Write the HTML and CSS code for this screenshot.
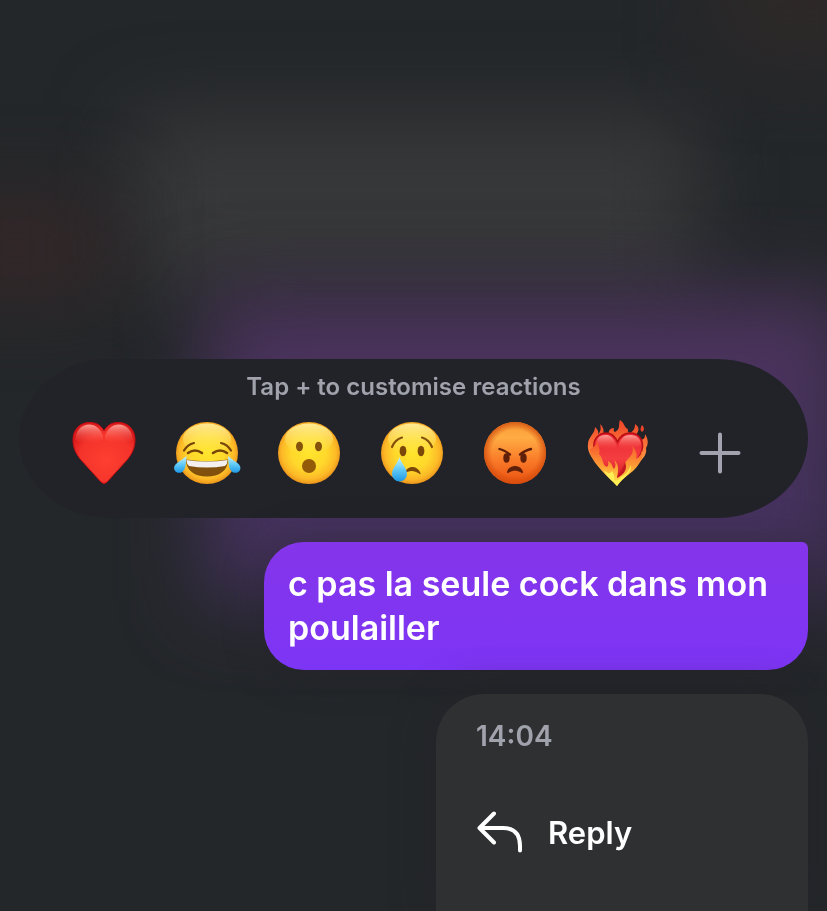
FILE: index.html
```html
<!DOCTYPE html>
<html lang="en">
<head>
<meta charset="utf-8">
<meta name="viewport" content="width=device-width, initial-scale=1">
<title>Message reactions</title>
<link rel="stylesheet" href="styles.css">
</head>
<body>
<div class="backdrop" aria-hidden="true">
  <span class="glow glow-grey"></span>
  <span class="glow glow-red"></span>
  <span class="glow glow-brown"></span>
  <span class="glow glow-purple"></span>
</div>
<main class="overlay">
  <section class="reactions" aria-label="Reactions">
    <p class="hint">Tap + to customise reactions</p>
    <div class="reaction-row">
      <button class="reaction" type="button" aria-label="Heart">
        <svg class="emoji" viewBox="0 0 72 72">
          <defs>
            <radialGradient id="heart" gradientUnits="userSpaceOnUse" cx="38" cy="43" r="38"><stop offset="0" stop-color="#ff3f30"/><stop offset=".7" stop-color="#f4332b"/><stop offset="1" stop-color="#d81a1b"/></radialGradient>
            <linearGradient id="heartShine" x1="0" y1="0" x2="0" y2="1"><stop offset="0" stop-color="#ffb5aa" stop-opacity=".85"/><stop offset="1" stop-color="#ff5a4c" stop-opacity="0"/></linearGradient>
          </defs>
          <path fill="url(#heart)" stroke="#c50d12" d="M36 14C33 8 28 5.500 21.500 5.500C11.500 5.500 5 13 5 22.500C5 31 8 37 13 43L33 65Q36 68 39 65L59 43C64 37 67 31 67 22.500C67 13 60.500 5.500 50.500 5.500C44 5.500 39 8 36 14Z"/>
          <path fill="url(#heartShine)" d="M35 19C32 11 27 7.500 21.500 7.500C13 7.500 7.500 14 7.500 23Q20 29 35 23ZM37 19C40 11 45 7.500 50.500 7.500C59 7.500 64.500 14 64.500 23Q52 29 37 23Z"/>
        </svg>
      </button>
      <button class="reaction" type="button" aria-label="Tears of joy">
        <svg class="emoji" viewBox="0 0 72 72">
          <defs>
            <radialGradient id="yellow" gradientUnits="userSpaceOnUse" cx="36" cy="35" r="32"><stop offset="0" stop-color="#ffe52c"/><stop offset=".55" stop-color="#ffd82b"/><stop offset=".85" stop-color="#fcb927"/><stop offset="1" stop-color="#ec951b"/></radialGradient>
            <linearGradient id="faceShine" x1="0" y1="0" x2="0" y2="1"><stop offset="0" stop-color="#fff0a0" stop-opacity=".9"/><stop offset="1" stop-color="#ffec60" stop-opacity="0"/></linearGradient>
            <linearGradient id="tear" x1="0" y1="0" x2="0" y2="1"><stop offset="0" stop-color="#c9f3ff"/><stop offset=".5" stop-color="#62caf8"/><stop offset="1" stop-color="#1e98e4"/></linearGradient>
          </defs>
          <circle cx="36" cy="36" r="31" fill="url(#yellow)"/>
          <ellipse cx="36" cy="22" rx="24" ry="15.500" fill="url(#faceShine)"/>
          <g fill="none" stroke="#75450b" stroke-width="2.200" stroke-linecap="round"><path d="M13 33.500Q16.500 27.500 23 26M50 26Q56.500 27.500 60 33.500"/><path stroke-width="2.600" d="M17 36Q24 31 31 36M42 36Q49 31 56 36"/></g>
          <path fill="#81500c" d="M15 42.500Q36 46 57 42.500C57 54 48 59.500 36 59.500S15 54 15 42.500Z"/>
          <path fill="#f3f0ef" d="M15.500 43Q36 46 56.500 43Q56.500 47 54 49Q36 52 18 49Q15.500 47 15.500 43Z"/>
          <path fill="url(#tear)" d="M15.500 39C15 45 15 50 13 53C10.500 57 5 56.500 3.500 53C1 47 9 45 15.500 39ZM57 39C57.500 45 57.500 50 59.500 53C62 57 67.500 56.500 69 53C71.500 47 63.500 45 57 39Z"/>
        </svg>
      </button>
      <button class="reaction" type="button" aria-label="Surprised">
        <svg class="emoji" viewBox="0 0 72 72">
          <circle cx="36" cy="36" r="31" fill="url(#yellow)"/>
          <ellipse cx="36" cy="22" rx="24" ry="15.500" fill="url(#faceShine)"/>
          <g fill="#85530c"><ellipse cx="26.500" cy="29.500" rx="3.500" ry="4.800"/><ellipse cx="45.500" cy="29.500" rx="3.500" ry="4.800"/><circle cx="36" cy="49" r="7" fill="#935a08"/></g>
        </svg>
      </button>
      <button class="reaction" type="button" aria-label="Crying">
        <svg class="emoji" viewBox="0 0 72 72">
          <circle cx="36" cy="36" r="31" fill="url(#yellow)"/>
          <ellipse cx="36" cy="22" rx="24" ry="15.500" fill="url(#faceShine)"/>
          <g fill="none" stroke="#85500c" stroke-width="2.200" stroke-linecap="round"><path d="M16 30Q19 22.500 26 20.500M46 20.500Q53 22.500 56 30"/></g>
          <g fill="#7b480a"><ellipse cx="27" cy="34" rx="3.400" ry="5.200"/><ellipse cx="45" cy="34" rx="3.400" ry="5.200"/><path d="M28 57C31 48 41 48 44.500 56Q45 58 43 56.500C38 53 33 53 28 57Z"/></g>
          <path fill="url(#tear)" d="M23.500 40C25 46 31 51 31 57A7.500 7.500 0 0 1 16 57C16 51 22 46 23.500 40Z"/>
        </svg>
      </button>
      <button class="reaction" type="button" aria-label="Angry">
        <svg class="emoji" viewBox="0 0 72 72">
          <defs>
            <linearGradient id="angry" x1="0" y1="0" x2="0" y2="1"><stop offset="0" stop-color="#f99a35"/><stop offset=".25" stop-color="#ffac43"/><stop offset=".6" stop-color="#fa7d2a"/><stop offset="1" stop-color="#e9500f"/></linearGradient>
            <radialGradient id="angryEdge"><stop offset=".75" stop-color="#d24c0d" stop-opacity="0"/><stop offset="1" stop-color="#d24c0d" stop-opacity=".8"/></radialGradient>
          </defs>
          <circle cx="36" cy="36" r="31" fill="url(#angry)"/>
          <circle cx="36" cy="36" r="31" fill="url(#angryEdge)"/>
          <g fill="none" stroke="#5c1d08" stroke-width="2.300" stroke-linecap="round"><path d="M20.500 32Q25 33 31 37.500M52 32Q47 33 41 37.500"/></g>
          <g fill="#5f2009"><ellipse cx="27.500" cy="41" rx="3.200" ry="4.800"/><ellipse cx="44.500" cy="41" rx="3.200" ry="4.800"/><path d="M28 55C30 47 42 47 44 55Q44 57 42 55.500C38 53 34 53 30 55.500Q28 57 28 55Z"/></g>
        </svg>
      </button>
      <button class="reaction" type="button" aria-label="Heart on fire">
        <svg class="emoji" viewBox="0 0 72 72">
          <defs>
            <linearGradient id="flame" x1="0" y1="0" x2="0" y2="1"><stop offset="0" stop-color="#ee4428"/><stop offset=".6" stop-color="#fb793a"/><stop offset="1" stop-color="#ffae48"/></linearGradient>
            <linearGradient id="burn" x1="0" y1="0" x2="0" y2="1"><stop offset="0" stop-color="#f34a2c"/><stop offset=".55" stop-color="#ff9a34"/><stop offset="1" stop-color="#fff04a"/></linearGradient>
            <linearGradient id="hot" x1="0" y1="0" x2="0" y2="1"><stop offset="0" stop-color="#e92531"/><stop offset=".5" stop-color="#f43e40"/><stop offset="1" stop-color="#c9141c"/></linearGradient>
          </defs>
          <path fill="url(#flame)" d="M18 48C10 41 6 34 7 27C7 20 14 17 14 10C17 13 18 15 17 18Q21 13 19 7Q24 11 22 18L28 18C27 14 29 11 33 11Q32 14 34 15C40 12 37 7 39 3C44 6 43 11 47 12Q46 15 49 16C53 14 54 11 54 7C59 10 58 14 55 18L60 23C64 22 64 20 64 17C68 23 67 28 65 31C66 36 64 41 54 49Z"/>
          <path fill="#ee4428" d="M61 8Q65 12 61 15Q58 13 61 8Z"/>
          <path fill="url(#hot)" stroke="#b70e16" stroke-width="1.500" d="M36.500 25C34 19 30 16 25 16C18 16 12 22 13 30C14 43 25 51 36 67C48 52 60 43 61.500 30C62 22 57 16 49.500 16C43 16 39 19 36.500 25Z"/>
          <path fill="url(#heartShine)" d="M35.500 28C32 20 29 18 24.500 18C18 18 15 22 15 28Q25 35 35.500 31ZM38 28C40 21 43 18 49.500 18C56 18 60 22 60 28Q48 35 38 31Z"/>
          <path fill="url(#burn)" d="M36 69C31 63 26 60 21 54C14 46 9 40 9 32C13 31 15 27 17 23C16 28 20 32 18 37C22 41 21 45 24 49C27 51 28 48 27 44C32 47 31 50 33 52Q36 48 33 43C39 48 37 55 36 61C45 54 41 47 47 42C51 38 53 34 51 29C56 34 56 38 55 42C59 40 61 36 60 33C64 40 58 48 52 54C46 59 41 62 36 69Z"/>
          <path fill="#ffef55" d="M36 69C31 63 26 61 23 53Q28 59 31 54Q34 58 33 63Q37 65 40 60Q47 57 50 48C51 57 41 61 36 69Z"/>
          <path fill="#c41821" d="M36 61C37 56 42 53 44 45Q48 55 36 61Z"/>
        </svg>
      </button>
      <button class="reaction" type="button" aria-label="Add reaction">
        <svg class="emoji plus" viewBox="0 0 72 72"><path d="M36 17.500V54.500M17.500 36H54.500"/></svg>
      </button>
    </div>
  </section>

  <p class="message" lang="fr">c pas la seule cock dans mon poulailler</p>

  <section class="menu" aria-label="Message actions">
    <time class="time">14:04</time>
    <button class="action" type="button">
      <svg class="action-icon" viewBox="0 0 48 48" aria-hidden="true"><path d="M18 5.500L3.500 20L18 34.500M3.500 20H27Q44 20 44 38V42.500"/></svg>
      <span>Reply</span>
    </button>
  </section>
</main>
</body>
</html>
```
FILE: styles.css
```css
* { box-sizing: border-box; }

body {
  margin: 0;
  background: #24272a;
  color: #fff;
  font-family: Inter, "Liberation Sans", sans-serif;
}

button {
  border: 0;
  padding: 0;
  background: none;
  color: inherit;
  font: inherit;
}

/* Out-of-focus conversation behind the overlay */
.backdrop {
  position: fixed;
  inset: 0;
  overflow: hidden;
}

.glow {
  position: absolute;
  filter: blur(40px);
}

.glow-grey {
  inset: 116px 16% auto 16%;
  height: 170px;
  background: #373839;
}

.glow-red {
  top: 200px;
  left: -80px;
  width: 190px;
  height: 96px;
  background: #342728;
}

.glow-brown {
  top: -60px;
  right: -60px;
  width: 170px;
  height: 120px;
  background: #2e2928;
}

.glow-purple {
  inset: 296px -24px auto 25%;
  height: 304px;
  background: linear-gradient(#4d345d, #46325f 70%);
}

.overlay {
  position: relative;
  display: flex;
  flex-direction: column;
  align-items: flex-end;
  gap: 24px;
  min-height: 100vh;
  padding: 359px 19px 0;
}

.reactions {
  align-self: stretch;
  padding: 14px 0 29px;
  border-radius: 92px / 80px;
  background: #222329;
}

.hint {
  margin: 0 0 16px;
  color: #a0a2ac;
  font-size: 24px;
  font-weight: 600;
  line-height: 28px;
  text-align: center;
}

.reaction-row {
  display: grid;
  grid-template-columns: repeat(7, 1fr);
  padding: 0 37px 0 34px;
}

.reaction {
  display: flex;
  justify-content: center;
}

.emoji {
  width: 72px;
  height: 72px;
}

.plus {
  fill: none;
  stroke: #a2a3ae;
  stroke-width: 4;
  stroke-linecap: round;
}

.message {
  max-width: 544px;
  margin: 0;
  padding: 20px 24px;
  border-radius: 40px 6px 40px 40px;
  background: linear-gradient(#8535ea, #7d35f5);
  box-shadow: 0 0 40px rgba(34, 34, 40, 0.4);
  font-size: 34px;
  font-weight: 600;
  line-height: 44px;
}

.menu {
  display: flex;
  flex: 1;
  flex-direction: column;
  width: 372px;
  padding: 20px 40px 0;
  border-radius: 48px 48px 0 0;
  background: #2f3032;
  box-shadow: 0 0 40px rgba(34, 34, 40, 0.7);
}

.time {
  color: #a0a2ac;
  font-size: 28px;
  font-weight: 600;
  line-height: 44px;
}

.action {
  display: flex;
  align-items: center;
  gap: 24px;
  height: 96px;
  margin-top: 26px;
  font-size: 31px;
  font-weight: 600;
}

.action-icon {
  width: 48px;
  height: 48px;
  fill: none;
  stroke: #fff;
  stroke-width: 4;
  stroke-linecap: round;
  stroke-linejoin: round;
}
```
